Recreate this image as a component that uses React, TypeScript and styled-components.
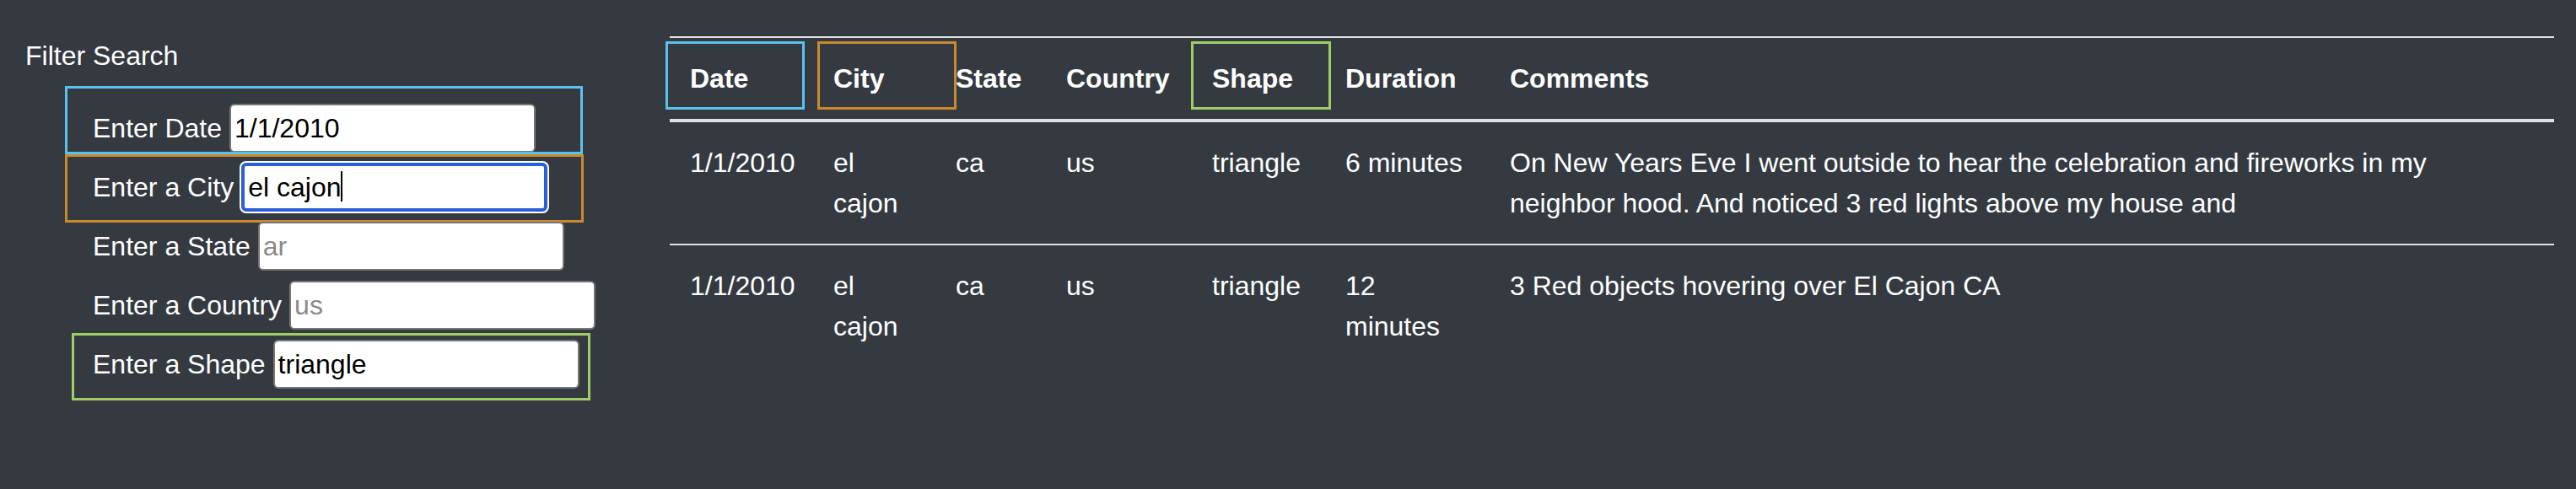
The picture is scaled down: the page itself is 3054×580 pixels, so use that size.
import React from 'react';
import styled, { createGlobalStyle } from 'styled-components';

const colors = {
  background: '#343a40',
  rule: '#dee2e6',
  blue: '#5bc2f0',
  orange: '#c98a2e',
  green: '#9fce67',
  focus: '#2b5fd6',
};

const GlobalStyle = createGlobalStyle`
  body {
    margin: 0;
    background: ${colors.background};
    color: #ffffff;
    font-family: "Liberation Sans", Arial, sans-serif;
  }
`;

const Page = styled.div`
  display: flex;
  width: 3054px;
  height: 580px;
  overflow: hidden;
  background: ${colors.background};
`;

const Sidebar = styled.aside`
  width: 794px;
  flex-shrink: 0;
  box-sizing: border-box;
  padding: 42px 0 0 30px;
`;

const Title = styled.h2`
  margin: 0;
  font-size: 32px;
  line-height: 48px;
  font-weight: normal;
`;

const FilterList = styled.ul`
  list-style: none;
  margin: 33px 0 0;
  padding: 0;
`;

const FilterRow = styled.li`
  position: relative;
  display: flex;
  align-items: center;
  gap: 9px;
  height: 58px;
  margin-bottom: 12px;
  padding-left: 80px;
`;

const Label = styled.label`
  font-size: 32px;
  line-height: 48px;
  white-space: nowrap;
`;

const Input = styled.input<{ $focused?: boolean }>`
  box-sizing: border-box;
  width: 363px;
  height: 58px;
  padding: 2px 4px;
  border: ${(p) => (p.$focused ? `4px solid ${colors.focus}` : '2px solid #767676')};
  border-radius: 6px;
  box-shadow: ${(p) => (p.$focused ? '0 0 0 2px #ffffff' : 'none')};
  background: #ffffff;
  color: #000000;
  font-family: "Liberation Sans", Arial, sans-serif;
  font-size: 32px;
  outline: none;

  &::placeholder {
    color: #8a8a8a;
  }
`;

// text cursor drawn after the value of the focused field
const Caret = styled.span`
  position: absolute;
  left: 374px;
  top: 10px;
  width: 2px;
  height: 36px;
  background: #000000;
`;

const Highlight = styled.span<{ $color: string; $left: number; $top: number; $width: number; $height: number }>`
  position: absolute;
  left: ${(p) => p.$left}px;
  top: ${(p) => p.$top}px;
  width: ${(p) => p.$width}px;
  height: ${(p) => p.$height}px;
  box-sizing: border-box;
  border: 3px solid ${(p) => p.$color};
  pointer-events: none;
`;

const TableWrap = styled.main`
  padding-top: 43px;
`;

const Table = styled.table`
  width: 2234px;
  table-layout: fixed;
  border-collapse: separate;
  border-spacing: 0;
  color: #ffffff;
  font-size: 32px;
  line-height: 48px;
`;

const Th = styled.th`
  position: relative;
  padding: 24px;
  text-align: left;
  vertical-align: bottom;
  font-weight: bold;
  border-top: 2px solid ${colors.rule};
  border-bottom: 4px solid ${colors.rule};
`;

const Row = styled.tr`
  & + & td {
    border-top: 2px solid ${colors.rule};
  }
`;

const Td = styled.td`
  padding: 24px;
  vertical-align: top;
`;

type Mark = { color: string; left: number; top: number; width: number; height: number };

const filters: { label: string; value?: string; placeholder?: string; focused?: boolean; mark?: Mark }[] = [
  { label: 'Enter Date', value: '1/1/2010', mark: { color: colors.blue, left: 47, top: -21, width: 614, height: 81 } },
  { label: 'Enter a City', value: 'el cajon', focused: true, mark: { color: colors.orange, left: 47, top: -10, width: 615, height: 81 } },
  { label: 'Enter a State', placeholder: 'ar' },
  { label: 'Enter a Country', placeholder: 'us' },
  { label: 'Enter a Shape', value: 'triangle', mark: { color: colors.green, left: 55, top: -8, width: 615, height: 80 } },
];

const columns: { title: string; width: number; mark?: Mark }[] = [
  { title: 'Date', width: 170, mark: { color: colors.blue, left: -5, top: 4, width: 165, height: 81 } },
  { title: 'City', width: 145, mark: { color: colors.orange, left: 5, top: 4, width: 165, height: 81 } },
  { title: 'State', width: 131 },
  { title: 'Country', width: 173 },
  { title: 'Shape', width: 158, mark: { color: colors.green, left: -1, top: 4, width: 166, height: 81 } },
  { title: 'Duration', width: 195 },
  { title: 'Comments', width: 1262 },
];

const sightings = [
  ['1/1/2010', 'el cajon', 'ca', 'us', 'triangle', '6 minutes', 'On New Years Eve I went outside to hear the celebration and fireworks in my neighbor hood. And noticed 3 red lights above my house and'],
  ['1/1/2010', 'el cajon', 'ca', 'us', 'triangle', '12 minutes', '3 Red objects hovering over El Cajon CA'],
];

const renderMark = (m?: Mark) =>
  m ? <Highlight $color={m.color} $left={m.left} $top={m.top} $width={m.width} $height={m.height} /> : null;

const App: React.FC = () => {
  return (
    <Page>
      <GlobalStyle />
      <Sidebar>
        <Title>Filter Search</Title>
        <FilterList>
          {filters.map((f) => (
            <FilterRow key={f.label}>
              <Label>{f.label}</Label>
              <Input type='text' defaultValue={f.value} placeholder={f.placeholder} $focused={f.focused} />
              {f.focused && <Caret />}
              {renderMark(f.mark)}
            </FilterRow>
          ))}
        </FilterList>
      </Sidebar>
      <TableWrap>
        <Table>
          <colgroup>
            {columns.map((c) => (
              <col key={c.title} style={{ width: c.width }} />
            ))}
          </colgroup>
          <thead>
            <tr>
              {columns.map((c) => (
                <Th key={c.title}>
                  {c.title}
                  {renderMark(c.mark)}
                </Th>
              ))}
            </tr>
          </thead>
          <tbody>
            {sightings.map((row, i) => (
              <Row key={i}>
                {row.map((cell, j) => (
                  <Td key={j}>{cell}</Td>
                ))}
              </Row>
            ))}
          </tbody>
        </Table>
      </TableWrap>
    </Page>
  );
};

export default App;
